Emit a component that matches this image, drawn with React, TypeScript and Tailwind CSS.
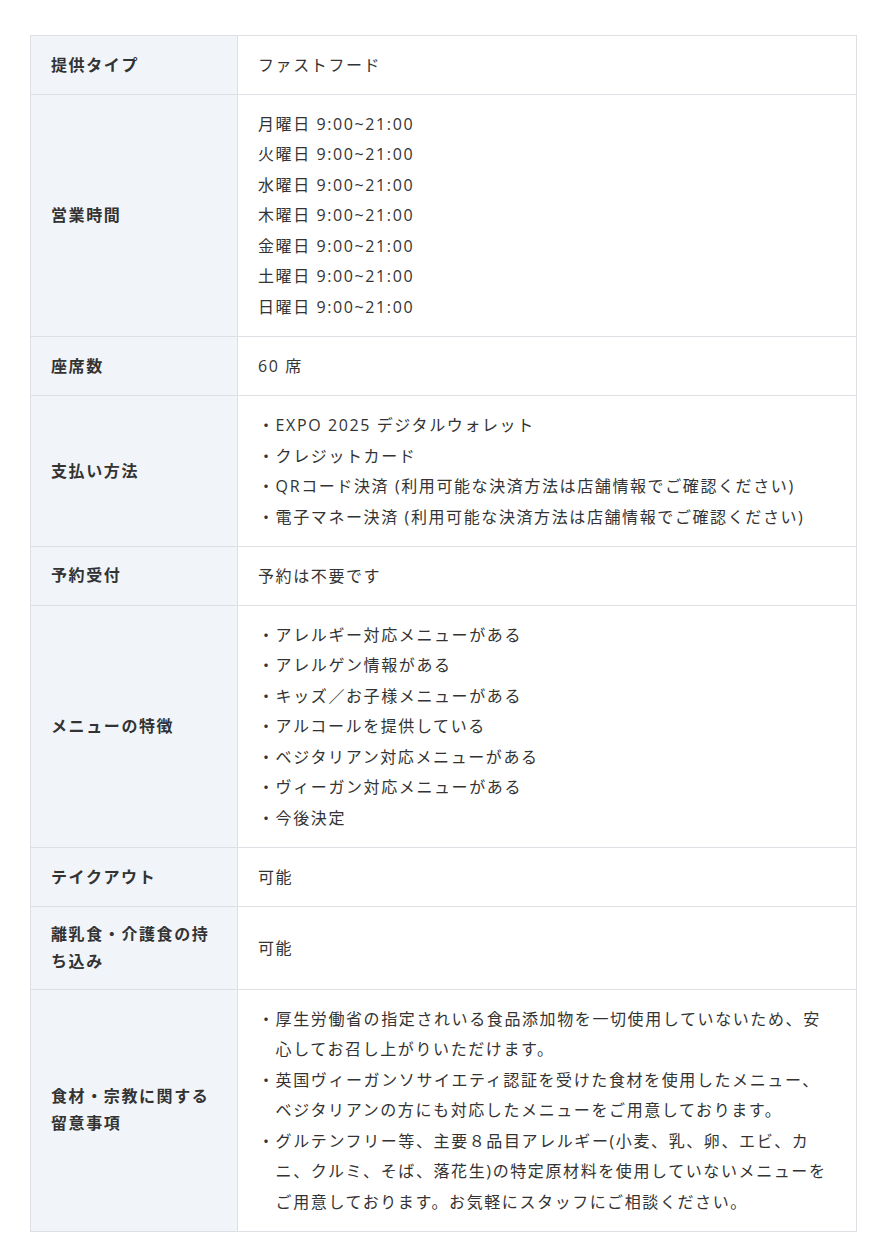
import React from 'react';

type Row = { label: string; lines: string[]; bullets?: boolean };

const rows: Row[] = [
  { label: '提供タイプ', lines: ['ファストフード'] },
  {
    label: '営業時間',
    lines: ['月', '火', '水', '木', '金', '土', '日'].map((d) => `${d}曜日 9:00~21:00`),
  },
  { label: '座席数', lines: ['60 席'] },
  {
    label: '支払い方法',
    bullets: true,
    lines: [
      'EXPO 2025 デジタルウォレット',
      'クレジットカード',
      'QRコード決済 (利用可能な決済方法は店舗情報でご確認ください)',
      '電子マネー決済 (利用可能な決済方法は店舗情報でご確認ください)',
    ],
  },
  { label: '予約受付', lines: ['予約は不要です'] },
  {
    label: 'メニューの特徴',
    bullets: true,
    lines: [
      'アレルギー対応メニューがある',
      'アレルゲン情報がある',
      'キッズ／お子様メニューがある',
      'アルコールを提供している',
      'ベジタリアン対応メニューがある',
      'ヴィーガン対応メニューがある',
      '今後決定',
    ],
  },
  { label: 'テイクアウト', lines: ['可能'] },
  { label: '離乳食・介護食の持ち込み', lines: ['可能'] },
  {
    label: '食材・宗教に関する留意事項',
    bullets: true,
    lines: [
      '厚生労働省の指定されいる食品添加物を一切使用していないため、安心してお召し上がりいただけます。',
      '英国ヴィーガンソサイエティ認証を受けた食材を使用したメニュー、ベジタリアンの方にも対応したメニューをご用意しております。',
      'グルテンフリー等、主要８品目アレルギー(小麦、乳、卵、エビ、カニ、クルミ、そば、落花生)の特定原材料を使用していないメニューをご用意しております。お気軽にスタッフにご相談ください。',
    ],
  },
];

export default function App() {
  return (
    <div className="bg-white min-h-[1237px] pt-[35px] pl-[30px] font-['Open_Sans','Noto_Sans_CJK_JP',sans-serif] text-[#333]">
      <table className="w-[827px] border-collapse border border-[#dde1e5] table-fixed">
        <colgroup>
          <col className="w-[207px]" />
          <col />
        </colgroup>
        <tbody>
          {rows.map((r) => (
            <tr key={r.label} className="border-b border-[#dde1e5]">
              <th className="bg-[#f1f5f9] border-r border-[#dde1e5] px-5 py-[13.8px] text-left align-middle text-[16px] font-bold leading-[27px] tracking-[0.1em]">
                {r.label}
              </th>
              <td className="px-5 py-[13.8px] align-middle text-[16px] leading-[30.5px] tracking-[0.1em]">
                {r.lines.map((l) =>
                  r.bullets ? (
                    <div key={l} className="pl-[1.1em] -indent-[1.1em]">
                      ・{l}
                    </div>
                  ) : (
                    <div key={l}>{l}</div>
                  )
                )}
              </td>
            </tr>
          ))}
        </tbody>
      </table>
    </div>
  );
}
